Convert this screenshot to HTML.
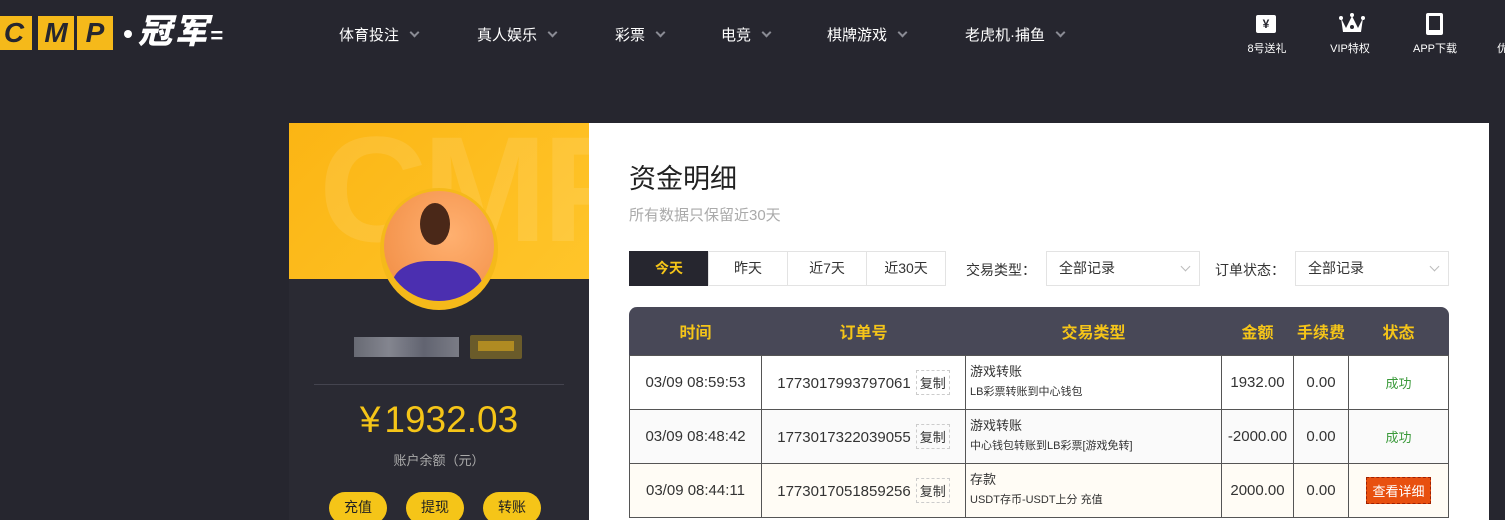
<!DOCTYPE html>
<html style="width:1505px;height:520px;overflow:hidden"><head><meta charset="utf-8"><style>
*{margin:0;padding:0;box-sizing:border-box}
body{width:1505px;height:520px;overflow:hidden;background:#26262f;font-family:"Liberation Sans","Noto Sans CJK SC",sans-serif;position:relative}
.a{position:absolute}
.nav{color:#fff;font-size:15px;top:24px}
.nav span{display:inline-block;width:7px;height:7px;border-right:2px solid #8a8b94;border-bottom:2px solid #8a8b94;transform:rotate(45deg);margin-left:12px;position:relative;top:-4px}
.ic{color:#fff;font-size:11px;top:40px;text-align:center;width:70px}
.logo b{position:absolute;top:0;width:36px;height:34px;background:#f5b91a;color:#26262f;font-style:italic;font-size:28px;font-weight:900;text-align:center;line-height:34px}
.tab{top:251px;height:35px;width:80px;border:1px solid #e3e3e3;text-align:center;line-height:33px;font-size:14px;color:#333;background:#fff}
.sel{top:251px;height:35px;width:154px;border:1px solid #e3e3e3;font-size:14px;color:#333;line-height:33px;padding-left:12px}
.sel i{position:absolute;right:10px;top:11px;width:7px;height:7px;border-right:1px solid #bbb;border-bottom:1px solid #bbb;transform:rotate(45deg)}
table{position:absolute;left:629px;top:307px;width:820px;border-collapse:collapse;font-size:14px;color:#333}
th{color:#f5c518;height:48px;font-size:16px;font-weight:bold}
td{border:1px solid #555;height:54px;text-align:center;font-size:15px}
td.l{text-align:left;padding-left:4px;font-size:13px;line-height:19px}
td.l small{font-size:11px}
.cp{display:inline-block;border:1px dashed #ccc;font-size:13px;padding:2px 3px;margin-left:5px}
.btn{top:492px;width:58px;height:32px;border-radius:16px;background:#f5c518;color:#222;font-size:14px;text-align:center;line-height:30px}
</style></head><body>
<div class="a logo" style="left:0;top:16px;width:112px;height:34px"><b style="left:-4px">C</b><b style="left:38px">M</b><b style="left:77px">P</b></div>
<div class="a" style="left:124px;top:30px;width:8px;height:8px;border-radius:50%;background:#fff"></div>
<div class="a" style="left:138px;top:12px;color:#fff;font-size:34px;line-height:40px;font-weight:900;font-style:italic;letter-spacing:2px">冠军<span style="font-size:22px">=</span></div>
<div class="a nav" style="left:339px">体育投注<span></span></div>
<div class="a nav" style="left:477px">真人娱乐<span></span></div>
<div class="a nav" style="left:615px">彩票<span></span></div>
<div class="a nav" style="left:721px">电竞<span></span></div>
<div class="a nav" style="left:827px">棋牌游戏<span></span></div>
<div class="a nav" style="left:965px">老虎机·捕鱼<span></span></div>
<div class="a" style="left:1256px;top:15px;width:20px;height:18px;background:#fff;border-radius:2px;color:#26262f;font-size:12px;text-align:center;line-height:18px;font-weight:bold">¥</div>
<svg class="a" style="left:1339px;top:12px" width="26" height="22"><path d="M2 6 L7 16 L13 4 L19 16 L24 6 L22 20 L4 20Z" fill="#fff"/><circle cx="13" cy="3" r="2" fill="#fff"/><circle cx="2" cy="6" r="2" fill="#fff"/><circle cx="24" cy="6" r="2" fill="#fff"/><circle cx="13" cy="15" r="2" fill="#26262f"/></svg>
<div class="a" style="left:1426px;top:13px;width:17px;height:22px;border:3px solid #fff;border-bottom-width:5px;border-radius:2px"></div>
<div class="a ic" style="left:1232px">8号送礼</div>
<div class="a ic" style="left:1315px">VIP特权</div>
<div class="a ic" style="left:1400px">APP下载</div>
<div class="a ic" style="left:1497px;width:20px;text-align:left">优</div>

<div class="a" style="left:289px;top:123px;width:300px;height:156px;background:linear-gradient(135deg,#fbb514,#ffc52a);overflow:hidden"><div style="position:absolute;left:30px;top:-20px;font-size:150px;font-weight:bold;color:rgba(255,255,255,0.10);letter-spacing:-5px">CMP</div></div>
<div class="a" style="left:289px;top:279px;width:300px;height:241px;background:#2a2a33"></div>
<div class="a" style="left:380px;top:188px;width:118px;height:122px;border-radius:50%;background:#f5b91a"></div>
<div class="a" style="left:384px;top:191px;width:110px;height:110px;border-radius:50%;background:radial-gradient(circle at 60% 40%,#ffb070,#f08a40);overflow:hidden"><div style="position:absolute;left:36px;top:12px;width:30px;height:42px;border-radius:50%;background:#4a2818"></div><div style="position:absolute;left:8px;top:70px;width:90px;height:60px;border-radius:40% 40% 0 0;background:#4b2fb0"></div></div>
<div class="a" style="left:354px;top:337px;width:105px;height:20px;background:linear-gradient(90deg,#777a84,#9a9ca6,#6f7280,#8e909a);opacity:.8"></div>
<div class="a" style="left:470px;top:335px;width:52px;height:24px;background:#6a5b2a;border-radius:2px"><div style="margin:6px 8px;height:10px;background:#b08b22"></div></div>
<div class="a" style="left:314px;top:384px;width:250px;height:1px;background:#44444f"></div>
<div class="a" style="left:289px;top:399px;width:300px;text-align:center;color:#f5c518;font-size:37px">¥<span style="margin-left:4px">1932.03</span></div>
<div class="a" style="left:289px;top:450px;width:300px;text-align:center;color:#aaa;font-size:13px">账户余额（元）</div>
<div class="a btn" style="left:329px">充值</div>
<div class="a btn" style="left:406px">提现</div>
<div class="a btn" style="left:483px">转账</div>

<div class="a" style="left:589px;top:123px;width:900px;height:397px;background:#fff;overflow:hidden"></div>
<div class="a" style="left:629px;top:157px;font-size:27px;color:#222">资金明细</div>
<div class="a" style="left:629px;top:204px;font-size:15px;color:#aaa">所有数据只保留近30天</div>
<div class="a tab" style="left:629px;background:#26262f;border-color:#26262f;color:#f5c518;font-weight:bold">今天</div>
<div class="a tab" style="left:708px">昨天</div>
<div class="a tab" style="left:787px">近7天</div>
<div class="a tab" style="left:866px">近30天</div>
<div class="a" style="left:966px;top:260px;font-size:14px;color:#333">交易类型：</div>
<div class="a sel" style="left:1046px">全部记录<i></i></div>
<div class="a" style="left:1215px;top:260px;font-size:14px;color:#333">订单状态：</div>
<div class="a sel" style="left:1295px">全部记录<i></i></div>

<div class="a" style="left:629px;top:307px;width:820px;height:48px;background:#484857;border-radius:8px 8px 0 0"></div>
<table>
<tr><th style="width:132px">时间</th><th style="width:204px">订单号</th><th style="width:256px">交易类型</th><th style="width:72px">金额</th><th style="width:55px">手续费</th><th>状态</th></tr>
<tr><td>03/09 08:59:53</td><td>1773017993797061<span class="cp">复制</span></td><td class="l">游戏转账<br><small>LB彩票转账到中心钱包</small></td><td>1932.00</td><td>0.00</td><td style="color:#3a9a3a;font-size:13px">成功</td></tr>
<tr style="background:#fafafa"><td>03/09 08:48:42</td><td>1773017322039055<span class="cp">复制</span></td><td class="l">游戏转账<br><small>中心钱包转账到LB彩票[游戏免转]</small></td><td>-2000.00</td><td>0.00</td><td style="color:#3a9a3a;font-size:13px">成功</td></tr>
<tr style="background:#fffcf5"><td>03/09 08:44:11</td><td>1773017051859256<span class="cp">复制</span></td><td class="l">存款<br><small>USDT存币-USDT上分 充值</small></td><td>2000.00</td><td>0.00</td><td><span style="display:inline-block;background:#e8500f;color:#fff;border:1px dashed #a02000;padding:3px 5px;font-size:13px">查看详细</span></td></tr>
</table>
</body></html>
